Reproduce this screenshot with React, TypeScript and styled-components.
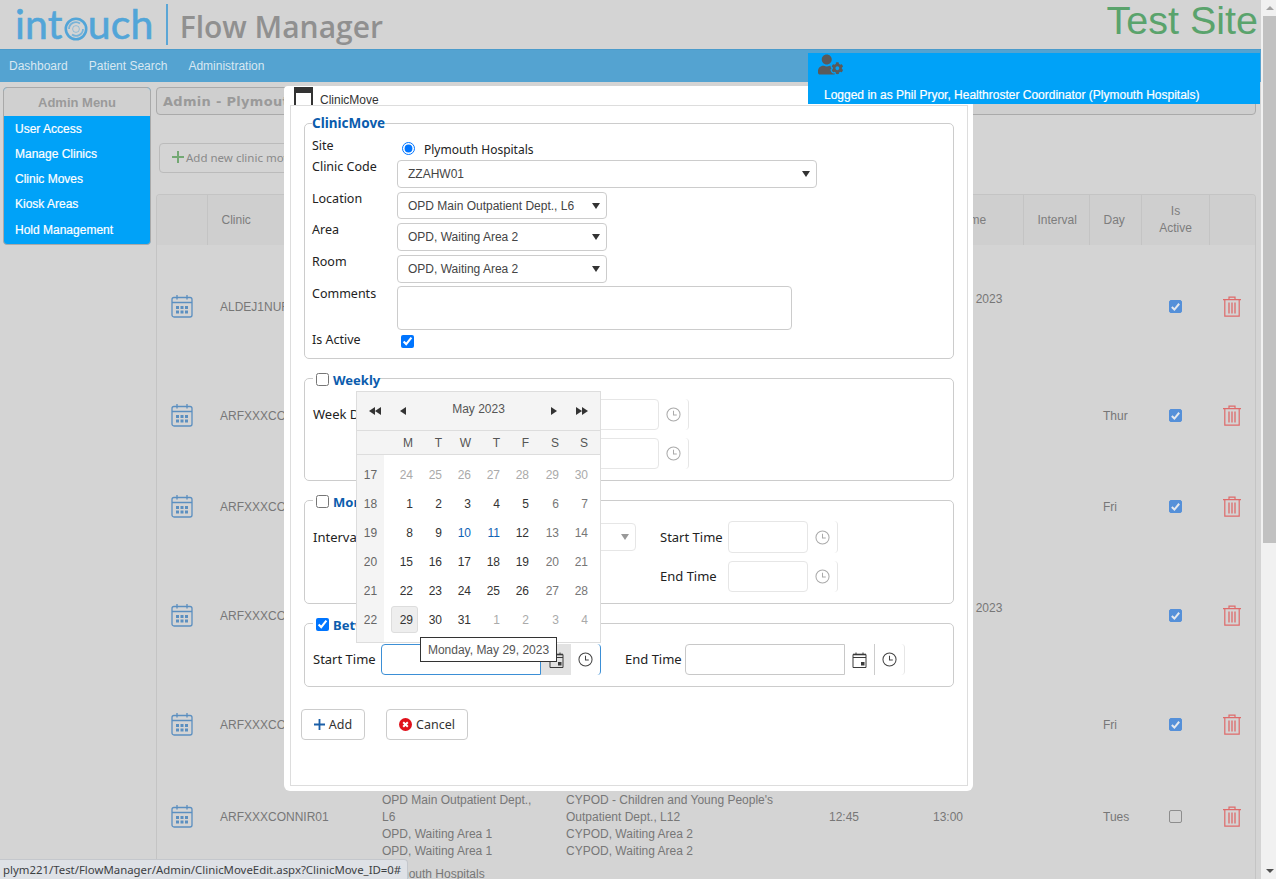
import React from "react";
import styled, { createGlobalStyle } from "styled-components";
import { FaUserCog } from "react-icons/fa";

const UI = `"Noto Sans", "Open Sans", sans-serif`;
const ARIAL = `"Liberation Sans", Arial, sans-serif`;

const Global = createGlobalStyle`
  html, body { margin: 0; height: 100%; overflow: hidden; background: #d4d4d4; }
  * { box-sizing: border-box; }
  #root { height: 100%; }
`;

const Viewport = styled.div`
  display: flex; height: 100vh; overflow: hidden; font-family: ${ARIAL}; font-size: 12px;
`;
const Page = styled.div`
  position: relative; flex: 1; min-width: 0; display: flex; flex-direction: column; background: #d4d4d4;
`;
const Scrollbar = styled.div`
  width: 15px; background: #f1f1f1; display: flex; flex-direction: column; align-items: flex-end;
`;
const ScrollArrow = styled.div<{ $down?: boolean }>`
  width: 13px; height: 16px; display: flex; align-items: center; justify-content: center; flex: none;
  &::before {
    content: ""; border-left: 4px solid transparent; border-right: 4px solid transparent;
    ${(p) => (p.$down ? "border-top: 4px solid #505050;" : "border-bottom: 4px solid #a3a3a3;")}
  }
`;
const ScrollThumb = styled.div`
  width: 13px; height: 527px; background: #c1c1c1; flex: none;
`;
const ScrollSpace = styled.div` flex: 1; `;

const Header = styled.header`
  height: 49px; flex: none; display: flex; align-items: flex-start; justify-content: space-between; padding-right: 3px;
`;
const Logo = styled.div` display: flex; align-items: flex-start; padding-left: 15px; `;
const LogoWord = styled.span`
  font-family: Lato, sans-serif; font-size: 41px; line-height: 50px; color: #52a5d8; letter-spacing: 0.2px;
  -webkit-text-stroke: 0.6px #52a5d8; display: flex; align-items: flex-start; margin-top: -1px;
`;
const LogoO = styled.svg` width: 24px; height: 24px; margin: 18px 0 0 1px; `;
const LogoBar = styled.div` width: 2px; height: 41px; margin: 4px 12px 0 12px; background: #5ba6d6; `;
const LogoProduct = styled.span`
  font-family: "Open Sans", sans-serif; font-weight: 600; font-size: 30px; line-height: 40px; margin-top: 7px; color: #909090;
`;
const TestSite = styled.div` font-size: 39.5px; line-height: 46px; margin-top: -3px; color: #5aa36c; white-space: nowrap; `;

const Nav = styled.nav`
  height: 33px; flex: none; background: #54a3d1; border-top: 1px solid #4b9bcb; display: flex; align-items: center;
  gap: 21px; padding-left: 9px; color: #d8e8f2; font-size: 12px;
`;

const Body = styled.div`
  flex: 1; min-height: 0; display: flex; gap: 5px; padding: 5px 5px 0 3px;
`;
const Side = styled.aside`
  width: 148px; height: 158px; flex: none; border: 1px solid #a9a9a9; border-radius: 4px; overflow: hidden; background: #00a2f8;
`;
const SideHead = styled.div`
  height: 28px; background: #d0d0d0; display: flex; align-items: center; justify-content: center; padding-top: 1px;
  font-family: ${ARIAL}; font-size: 13px; font-weight: 700; color: #9a9a9a;
`;
const SideItem = styled.div`
  height: 25.25px; display: flex; align-items: center; padding-left: 11px; color: #fff; font-size: 12px; -webkit-text-stroke: 0.2px #fff;
`;

const Main = styled.main` flex: 1; min-width: 0; display: flex; flex-direction: column; align-items: flex-start; `;
const TitleBox = styled.div`
  width: 100%; height: 28px; flex: none; background: #cfcfcf; border: 1px solid #aaa; border-radius: 4px; padding-left: 6px;
  display: flex; align-items: center; font-family: "DejaVu Sans", sans-serif; font-weight: 700; font-size: 13px; letter-spacing: 0.3px; color: #9a9a9a;
`;
const AddNew = styled.div`
  margin: 28px 0 0 3px; height: 30px; width: 170px; flex: none; border: 1px solid #bbb; border-radius: 4px; padding: 0 0 2px 12px;
  display: flex; align-items: center; gap: 2px; font-family: ${UI}; font-size: 11.5px; color: #8a8a8a;
`;
const Plus = styled.svg` width: 12px; height: 12px; flex: none; `;

const Table = styled.section`
  margin-top: 21px; width: 100%; flex: 1; min-height: 0; border: 1px solid #c4c4c4; border-bottom: 0; border-radius: 4px 4px 0 0; overflow: hidden;
`;
const HeadRow = styled.div`
  height: 50px; background: #cfcfcf;
  display: grid; grid-template-columns: 51px 163px 184px 263px 104px 102px 66px 52px 68px 1fr;
`;
const HeadCell = styled.div<{ $center?: boolean }>`
  border-right: 1px solid #c4c4c4; display: flex; align-items: center; color: #7d7d7d; line-height: 17px;
  padding-left: ${(p) => (p.$center ? "0" : "13.5px")};
  justify-content: ${(p) => (p.$center ? "center" : "flex-start")}; text-align: ${(p) => (p.$center ? "center" : "left")};
  &:last-child { border-right: 0; }
`;
const Row = styled.div<{ $h: number }>`
  height: ${(p) => p.$h}px; display: grid; align-items: center; color: #777; line-height: 17px;
  grid-template-rows: ${(p) => p.$h}px;
  grid-template-columns: 51px 162px 184px 263px 104px 102px 68px 50px 68px 1fr;
`;
const IconCell = styled.div` display: flex; justify-content: center; padding-right: 1px; `;
const Cell = styled.div<{ $lift?: boolean }>`
  padding-left: 12px; white-space: nowrap; padding-bottom: ${(p) => (p.$lift ? "16px" : "0")}; margin-top: 3px;
`;
const MultiCell = styled.div`
  padding-left: 12px; align-self: start; margin-top: 25px;
`;
const LastLine = styled.div` margin-top: 6px; `;
const ToggleCell = styled.div` display: flex; justify-content: center; `;
const DimBox = styled.span<{ $on: boolean }>`
  width: 13px; height: 13px; border-radius: 2px; display: flex; align-items: center; justify-content: center;
  background: ${(p) => (p.$on ? "#5590d9" : "#d4d4d4")}; border: 1px solid ${(p) => (p.$on ? "#5590d9" : "#8d8d8d")};
`;
const CheckMark = styled.svg` width: 11px; height: 11px; `;
const CalIcon = styled.svg` width: 22px; height: 24px; `;
const TrashIcon = styled.svg` width: 18px; height: 21px; `;
const TrashCell = styled.div` display: flex; justify-content: center; `;

const LoggedPanel = styled.div`
  position: absolute; left: 808px; top: 53px; width: 452px; height: 51px; background: #00a2f8; color: #fff; z-index: 3;
  display: flex; flex-direction: column; justify-content: space-between; padding: 0 0 2px 16px; font-size: 12px;
  -webkit-text-stroke: 0.2px #fff;
`;
const UserIcon = styled.div` margin: -1px 0 0 -6px; height: 24px; color: #5a5a5a; font-size: 25px; line-height: 25px; -webkit-text-stroke: 0; `;

const Modal = styled.div`
  position: absolute; left: 284px; top: 86px; width: 689px; height: 705px; background: #fff; border-radius: 4px 4px 6px 6px; z-index: 2;
  display: flex; flex-direction: column; padding: 0 5px 5px 6px;
`;
const TitleBar = styled.div`
  height: 19px; flex: none; display: flex; align-items: flex-start; gap: 7px; padding-top: 7px; font-size: 12px; color: #333; line-height: 14px; position: relative; z-index: 1;
`;
const WindowIcon = styled.span`
  width: 19px; height: 18px; margin: -6px 0 0 4px; border: 2px solid #333; border-top-width: 6px; border-bottom: 0; background: #fff; flex: none;
`;
const Content = styled.div`
  flex: 1; min-height: 0; border: 1px solid #ddd; padding: 8px 13px 0 13px; display: flex; flex-direction: column; font-family: ${UI}; font-size: 12.5px; color: #222;
`;
const Field = styled.fieldset<{ $gap?: number; $pb: number; $pl?: number; $large?: boolean }>`
  margin: ${(p) => p.$gap ?? 0}px 0 0 0; border: 1px solid #ccc; border-radius: 5px; padding: 0 8px ${(p) => p.$pb}px ${(p) => p.$pl ?? 7}px; min-width: 0;
  display: flex; flex-direction: column; font-size: ${(p) => (p.$large ? "13px" : "12.5px")};
`;
const Legend = styled.legend`
  padding: 0; height: 18px; line-height: 18px; display: flex; align-items: center; gap: 4px;
  font-family: ${UI}; font-weight: 700; font-size: 13.5px; color: #0b5cad;
`;
const CheckLegend = styled(Legend)`
  padding-top: 4px; font-size: 13px;
`;
const LegendCheck = styled.input`
  margin: 0 0 2px 3px; width: 13px; height: 13px;
`;
const FormRow = styled.div<{ $h: number; $mt: number }>`
  display: flex; align-items: flex-start; height: ${(p) => p.$h}px; margin-top: ${(p) => p.$mt}px;
`;
const Label = styled.label<{ $w?: number; $y?: number }>`
  width: ${(p) => p.$w ?? 85}px; flex: none; line-height: 14px; padding-top: ${(p) => p.$y ?? 0}px; white-space: nowrap; color: #222;
`;
const Indent = styled.div<{ $w: number }>` width: ${(p) => p.$w}px; flex: none; `;
const Radio = styled.input` margin: 5px 9px 0 5px; width: 13px; height: 13px; `;
const RadioText = styled.span` font-size: 12px; line-height: 14px; padding-top: 6px; `;
const SelectBox = styled.div<{ $w: number; $muted?: boolean }>`
  width: ${(p) => p.$w}px; height: ${(p) => (p.$muted ? "28px" : "100%")}; margin-top: ${(p) => (p.$muted ? "2px" : "0")};
  flex: none; border: 1px solid ${(p) => (p.$muted ? "#e6e6e6" : "#ccc")}; border-radius: 4px; padding: 0 6px 0 10px;
  display: flex; align-items: center; justify-content: space-between; font-family: ${ARIAL}; font-size: 12px; color: #444;
  &::after {
    content: ""; margin-left: auto; border-left: 4px solid transparent; border-right: 4px solid transparent;
    border-top: 6px solid ${(p) => (p.$muted ? "#999" : "#333")};
  }
`;
const TextArea = styled.textarea`
  width: 395px; height: 100%; flex: none; border: 1px solid #ccc; border-radius: 4px; resize: none; outline: 0; padding: 0; background: #fff;
`;
const ActiveCheck = styled.input` margin: 2px 0 0 4px; width: 13px; height: 13px; `;

const TimeGroup = styled.div`
  display: flex; height: 100%; flex: none;
`;
type Tone = "off" | "on" | "focus";
const TimeInput = styled.input<{ $w: number; $tone: Tone }>`
  width: ${(p) => p.$w}px; height: 100%; padding: 0; outline: 0; background: #fff;
  border: 1px solid ${(p) => (p.$tone === "off" ? "#e6e6e6" : p.$tone === "on" ? "#c8c8c8" : "#3b8fd6")};
  border-radius: ${(p) => (p.$tone === "off" ? "4px" : "4px 0 0 4px")};
`;
const AddOn = styled.div<{ $tone: Tone; $last?: boolean; $pressed?: boolean }>`
  width: 30px; flex: none; display: flex; align-items: center; justify-content: center;
  background: ${(p) => (p.$pressed ? "#e2e2e2" : "transparent")};
  border-right: ${(p) => (p.$pressed ? "0" : p.$last ? `1px solid ${p.$tone === "focus" ? "#3b8fd6" : "#e6e6e6"}` : "1px solid #ccc")};
  border-radius: ${(p) => (p.$last ? "0 4px 4px 0" : "0")};
  color: ${(p) => (p.$tone === "off" ? "#aaa" : "#444")};
`;
const ClockSvg = styled.svg` width: 15px; height: 15px; `;
const PickSvg = styled.svg` width: 15px; height: 16px; `;

const FormActions = styled.div` display: flex; gap: 21px; margin: 22px 0 0 -3px; `;
const ActionButton = styled.button<{ $w: number }>`
  width: ${(p) => p.$w}px; height: 31px; background: #fff; border: 1px solid #ccc; border-radius: 4px; padding: 0 0 1px;
  display: flex; align-items: center; justify-content: center; gap: 4px; font-family: ${UI}; font-size: 12.5px; color: #333;
`;
const ButtonIcon = styled.svg<{ $s: number }>` width: ${(p) => p.$s}px; height: ${(p) => p.$s}px; flex: none; `;

const Calendar = styled.div`
  position: absolute; left: 72px; top: 305px; width: 245px; height: 252px; background: #fff; border: 1px solid #ddd; z-index: 4;
  font-family: ${ARIAL}; font-size: 12px; color: #333; display: flex; flex-direction: column;
`;
const CalHead = styled.div`
  height: 39px; flex: none; background: #f4f4f4; border-bottom: 1px solid #ddd; padding: 0 4px;
  display: grid; grid-template-columns: 28px 28px 1fr 28px 28px; align-items: center; justify-items: center; color: #555;
`;
const CalTitle = styled.div` margin-top: -4px; `;
const CalArrow = styled.svg` width: 14px; height: 10px; `;
const CalGrid = styled.div`
  display: grid; grid-template-columns: 27px repeat(5, 29px) 30px 29px; align-items: center;
`;
const WeekDays = styled(CalGrid)`
  height: 24px; flex: none; background: #f4f4f4; border-bottom: 1px solid #ddd; color: #555;
`;
const WeekDay = styled.div` text-align: right; `;
const CalBody = styled.div`
  flex: 1; padding-top: 5px; background: linear-gradient(to right, #f4f4f4 27px, #fff 27px); display: flex; flex-direction: column;
`;
const CalRow = styled(CalGrid)` height: 29px; `;
const WeekNo = styled.div` text-align: center; color: #666; `;
const DayCell = styled.div<{ $kind: "day" | "end" | "out" | "link" }>`
  text-align: right; color: ${(p) => ({ day: "#333", end: "#777", out: "#aaa", link: "#0f62b5" })[p.$kind]};
`;
const Selected = styled.span`
  display: inline-block; margin: 0 -5px 0 0; padding: 5.5px 4px 5.5px 8px; background: #eee; border: 1px solid #ddd; border-radius: 3px; line-height: 14px;
`;
const Tooltip = styled.div`
  position: absolute; left: 136px; top: 551px; width: 137px; height: 25px; background: #fff; border: 1px solid #333; z-index: 5;
  display: flex; align-items: center; justify-content: center; font-family: ${ARIAL}; font-size: 12px; color: #555; white-space: nowrap;
`;
const StatusBubble = styled.div`
  position: absolute; left: 0; bottom: 0; width: 408px; height: 20px; background: #dee1e6; border: 1px solid #c4c7cc; border-width: 1px 1px 0 0;
  border-radius: 0 4px 0 0; z-index: 6; display: flex; align-items: center; padding-left: 3px; font-family: ${UI}; font-size: 11.4px; color: #3c4043; white-space: nowrap;
`;

const Clock = () => (
  <ClockSvg viewBox="0 0 16 16" fill="none" stroke="currentColor" strokeWidth="1.1">
    <circle cx="8" cy="8" r="7" />
    <path d="M8 4v4.5h3.5" />
  </ClockSvg>
);
const Pick = () => (
  <PickSvg viewBox="0 0 15 16" fill="none" stroke="#3a3a3a">
    <path d="M1 2.5h13v13H1z" />
    <path d="M1 2.5h13" strokeWidth="1.6" />
    <path d="M1 5.5h13" />
    <path d="M4 .5v2.5M11 .5v2.5" />
    <rect x="9" y="10" width="3.5" height="3.5" fill="#3a3a3a" stroke="none" />
  </PickSvg>
);
const ClinicCal = () => (
  <CalIcon viewBox="0 0 22 24" fill="none" stroke="#5b8fc0" strokeWidth="1.3">
    <rect x="1" y="3.5" width="20" height="19.5" rx="2" />
    <path d="M1 8.5h20M6 1v4.5M16 1v4.5" />
    <g fill="#5b8fc0" stroke="none">
      <rect x="5" y="12" width="3" height="3" /><rect x="9.5" y="12" width="3" height="3" /><rect x="14" y="12" width="3" height="3" />
      <rect x="5" y="16.5" width="3" height="3" /><rect x="9.5" y="16.5" width="3" height="3" /><rect x="14" y="16.5" width="3" height="3" />
    </g>
  </CalIcon>
);
const Trash = () => (
  <TrashIcon viewBox="0 0 18 21" fill="none" stroke="#de6a6a" strokeWidth="1.2">
    <path d="M0 3.6h18M6 3.4V1.2h6v2.2M1.8 3.6v16.6h14.4V3.6" />
    <path d="M6 6.5v11M9 6.5v11M12 6.5v11" strokeWidth="1.3" />
  </TrashIcon>
);
const DimCheck = ({ on }: { on: boolean }) => (
  <DimBox $on={on}>
    {on && (
      <CheckMark viewBox="0 0 12 12" fill="none" stroke="#e4e8ee" strokeWidth="2.2">
        <path d="M2 6.5l2.8 2.8L10 3" />
      </CheckMark>
    )}
  </DimBox>
);
const Triangle = ({ dir, double }: { dir: "l" | "r"; double?: boolean }) => (
  <CalArrow viewBox="0 0 14 10" fill="#333">
    {dir === "l" ? (
      double ? <path d="M7 1v8L1 5zM13 1v8L7 5z" /> : <path d="M10 1v8L4 5z" />
    ) : double ? (
      <path d="M1 1v8l6-4zM7 1v8l6-4z" />
    ) : (
      <path d="M4 1v8l6-4z" />
    )}
  </CalArrow>
);

const rows = [
  { h: 122, clinic: "ALDEJ1NUR01", end: "12 May 2023", lift: true, day: "", on: true },
  { h: 96, clinic: "ARFXXXCONNIR01", end: "", day: "Thur", on: true },
  { h: 86, clinic: "ARFXXXCONNIR01", end: "", day: "Fri", on: true },
  { h: 132, clinic: "ARFXXXCONNIR01", end: "12 May 2023", lift: true, day: "", on: true },
  { h: 86, clinic: "ARFXXXCONNIR01", end: "", day: "Fri", on: true },
];

const weeks: [number, number[]][] = [
  [17, [24, 25, 26, 27, 28, 29, 30]],
  [18, [1, 2, 3, 4, 5, 6, 7]],
  [19, [8, 9, 10, 11, 12, 13, 14]],
  [20, [15, 16, 17, 18, 19, 20, 21]],
  [21, [22, 23, 24, 25, 26, 27, 28]],
  [22, [29, 30, 31, 1, 2, 3, 4]],
];
const dayKind = (w: number, i: number, d: number) => {
  if (w === 0 || (w === 5 && i > 2)) return "out" as const;
  if (i > 4) return "end" as const;
  if (d === 10 || d === 11) return "link" as const;
  return "day" as const;
};

const TimePick = ({ w, tone, date, pressed }: { w: number; tone: Tone; date?: boolean; pressed?: boolean }) => (
  <TimeGroup>
    <TimeInput $w={w} $tone={tone} disabled={tone === "off"} />
    {date && <AddOn $tone={tone} $pressed={pressed}><Pick /></AddOn>}
    <AddOn $tone={tone} $last><Clock /></AddOn>
  </TimeGroup>
);

export default function App() {
  return (
    <Viewport>
      <Global />
      <Page>
        <Header>
          <Logo>
            <LogoWord>
              int
              <LogoO viewBox="0 0 24 24" fill="none" stroke="#52a5d8">
                <circle cx="12" cy="12" r="10.2" strokeWidth="2.6" />
                <path d="M5 12a7 7 0 0 1 11-5.6M19 12a7 7 0 0 1-11 5.6" strokeWidth="1.8" opacity="0.7" />
                <circle cx="12" cy="12" r="3.4" strokeWidth="1" opacity="0.5" />
              </LogoO>
              uch
            </LogoWord>
            <LogoBar />
            <LogoProduct>Flow Manager</LogoProduct>
          </Logo>
          <TestSite>Test Site</TestSite>
        </Header>
        <Nav>
          <span>Dashboard</span>
          <span>Patient Search</span>
          <span>Administration</span>
        </Nav>
        <Body>
          <Side>
            <SideHead>Admin Menu</SideHead>
            <SideItem>User Access</SideItem>
            <SideItem>Manage Clinics</SideItem>
            <SideItem>Clinic Moves</SideItem>
            <SideItem>Kiosk Areas</SideItem>
            <SideItem>Hold Management</SideItem>
          </Side>
          <Main>
            <TitleBox>Admin - Plymouth Hospitals</TitleBox>
            <AddNew>
              <Plus viewBox="0 0 12 12" fill="#73a873"><path d="M5 0h2v5h5v2H7v5H5V7H0V5h5z" /></Plus>
              Add new clinic move
            </AddNew>
            <Table>
              <HeadRow>
                <HeadCell />
                <HeadCell>Clinic</HeadCell>
                <HeadCell>From</HeadCell>
                <HeadCell>To</HeadCell>
                <HeadCell>Start Time</HeadCell>
                <HeadCell>End Time</HeadCell>
                <HeadCell>Interval</HeadCell>
                <HeadCell>Day</HeadCell>
                <HeadCell $center>Is<br />Active</HeadCell>
                <HeadCell />
              </HeadRow>
              {rows.map((r, i) => (
                <Row key={i} $h={r.h}>
                  <IconCell><ClinicCal /></IconCell>
                  <Cell>{r.clinic}</Cell>
                  <Cell />
                  <Cell />
                  <Cell />
                  <Cell $lift={r.lift}>{r.end}</Cell>
                  <Cell />
                  <Cell>{r.day}</Cell>
                  <ToggleCell><DimCheck on={r.on} /></ToggleCell>
                  <TrashCell><Trash /></TrashCell>
                </Row>
              ))}
              <Row $h={98}>
                <IconCell><ClinicCal /></IconCell>
                <Cell>ARFXXXCONNIR01</Cell>
                <MultiCell>
                  OPD Main Outpatient Dept.,<br />L6<br />OPD, Waiting Area 1<br />OPD, Waiting Area 1
                  <LastLine>Plymouth Hospitals</LastLine>
                </MultiCell>
                <MultiCell>
                  CYPOD - Children and Young People's<br />Outpatient Dept., L12<br />CYPOD, Waiting Area 2<br />CYPOD, Waiting Area 2
                </MultiCell>
                <Cell>12:45</Cell>
                <Cell>13:00</Cell>
                <Cell />
                <Cell>Tues</Cell>
                <ToggleCell><DimCheck on={false} /></ToggleCell>
                <TrashCell><Trash /></TrashCell>
              </Row>
            </Table>
          </Main>
        </Body>

        <LoggedPanel>
          <UserIcon><FaUserCog /></UserIcon>
          <div>Logged in as Phil Pryor, Healthroster Coordinator (Plymouth Hospitals)</div>
        </LoggedPanel>

        <Modal>
          <TitleBar><WindowIcon />ClinicMove</TitleBar>
          <Content>
            <Field $pb={9}>
              <Legend>ClinicMove</Legend>
              <FormRow $h={23} $mt={5}>
                <Label $y={2}>Site</Label>
                <Radio type="radio" defaultChecked name="site" />
                <RadioText>Plymouth Hospitals</RadioText>
              </FormRow>
              <FormRow $h={28} $mt={0}><Label>Clinic Code</Label><SelectBox $w={420}>ZZAHW01</SelectBox></FormRow>
              <FormRow $h={27} $mt={4}><Label>Location</Label><SelectBox $w={210}>OPD Main Outpatient Dept., L6</SelectBox></FormRow>
              <FormRow $h={28} $mt={4}><Label>Area</Label><SelectBox $w={210}>OPD, Waiting Area 2</SelectBox></FormRow>
              <FormRow $h={28} $mt={4}><Label>Room</Label><SelectBox $w={210}>OPD, Waiting Area 2</SelectBox></FormRow>
              <FormRow $h={44} $mt={3}><Label $y={1}>Comments</Label><TextArea /></FormRow>
              <FormRow $h={16} $mt={3}>
                <Label>Is Active</Label>
                <ActiveCheck type="checkbox" defaultChecked />
              </FormRow>
            </Field>

            <Field $gap={10} $pb={11} $pl={8} $large>
              <CheckLegend><LegendCheck type="checkbox" />Weekly</CheckLegend>
              <FormRow $h={31} $mt={12}>
                <Label $w={266} $y={8}>Week Days</Label>
                <TimePick w={80} tone="off" />
              </FormRow>
              <FormRow $h={31} $mt={8}>
                <Indent $w={266} />
                <TimePick w={80} tone="off" />
              </FormRow>
            </Field>

            <Field $gap={10} $pb={11} $pl={8} $large>
              <CheckLegend><LegendCheck type="checkbox" />Monthly</CheckLegend>
              <FormRow $h={32} $mt={12}>
                <Label $w={90} $y={9}>Interval</Label>
                <SelectBox $w={233} $muted />
                <Indent $w={24} />
                <Label $w={68} $y={9}>Start Time</Label>
                <TimePick w={80} tone="off" />
              </FormRow>
              <FormRow $h={31} $mt={8}>
                <Indent $w={347} />
                <Label $w={68} $y={8}>End Time</Label>
                <TimePick w={80} tone="off" />
              </FormRow>
            </Field>

            <Field $gap={10} $pb={11} $pl={8} $large>
              <CheckLegend><LegendCheck type="checkbox" defaultChecked />Between</CheckLegend>
              <FormRow $h={31} $mt={12}>
                <Label $w={68} $y={8}>Start Time</Label>
                <TimePick w={160} tone="focus" date pressed />
                <Indent $w={24} />
                <Label $w={60} $y={8}>End Time</Label>
                <TimePick w={160} tone="on" date />
              </FormRow>
            </Field>

            <FormActions>
              <ActionButton $w={64}>
                <ButtonIcon $s={11} viewBox="0 0 12 12" fill="#1b5fa8"><path d="M5 0h2v5h5v2H7v5H5V7H0V5h5z" /></ButtonIcon>
                Add
              </ActionButton>
              <ActionButton $w={82}>
                <ButtonIcon $s={13} viewBox="0 0 13 13">
                  <circle cx="6.5" cy="6.5" r="6.5" fill="#e0101a" />
                  <path d="M4.2 4.2l4.6 4.6M8.8 4.2l-4.6 4.6" stroke="#fff" strokeWidth="2" />
                </ButtonIcon>
                Cancel
              </ActionButton>
            </FormActions>
          </Content>

          <Calendar>
            <CalHead>
              <Triangle dir="l" double />
              <Triangle dir="l" />
              <CalTitle>May 2023</CalTitle>
              <Triangle dir="r" />
              <Triangle dir="r" double />
            </CalHead>
            <WeekDays>
              <div />
              {["M", "T", "W", "T", "F", "S", "S"].map((d, i) => <WeekDay key={i}>{d}</WeekDay>)}
            </WeekDays>
            <CalBody>
              {weeks.map(([no, days], w) => (
                <CalRow key={no}>
                  <WeekNo>{no}</WeekNo>
                  {days.map((d, i) => (
                    <DayCell key={i} $kind={dayKind(w, i, d)}>
                      {w === 5 && i === 0 ? <Selected>{d}</Selected> : d}
                    </DayCell>
                  ))}
                </CalRow>
              ))}
            </CalBody>
          </Calendar>
          <Tooltip>Monday, May 29, 2023</Tooltip>
        </Modal>
        <StatusBubble>plym221/Test/FlowManager/Admin/ClinicMoveEdit.aspx?ClinicMove_ID=0#</StatusBubble>
      </Page>
      <Scrollbar>
        <ScrollArrow />
        <ScrollThumb />
        <ScrollSpace />
        <ScrollArrow $down />
      </Scrollbar>
    </Viewport>
  );
}
